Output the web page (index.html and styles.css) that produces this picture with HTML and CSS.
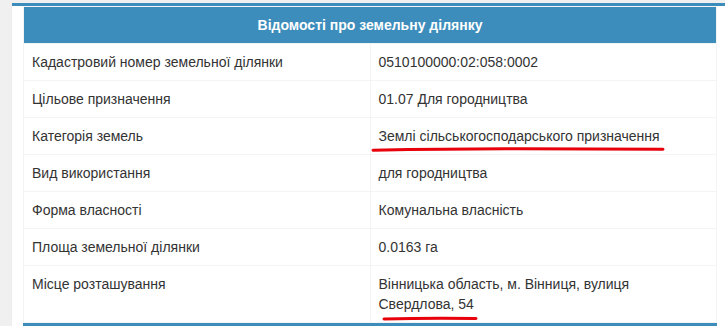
FILE: index.html
```html
<!DOCTYPE html>
<html lang="uk">
<head>
<meta charset="utf-8">
<title>Відомості про земельну ділянку</title>
<link rel="stylesheet" href="styles.css">
</head>
<body>
<div class="card">
  <table class="info">
    <thead>
      <tr><th colspan="2">Відомості про земельну ділянку</th></tr>
    </thead>
    <tbody>
      <tr><td>Кадастровий номер земельної ділянки</td><td>0510100000:02:058:0002</td></tr>
      <tr><td>Цільове призначення</td><td>01.07 Для городництва</td></tr>
      <tr><td>Категорія земель</td><td><span class="mark">Землі сільськогосподарського призначення<svg class="stroke stroke-long" viewBox="0 0 292 6" preserveAspectRatio="none"><path d="M1 4 Q 80 2 146 2.2 T 291 2.8" /></svg></span></td></tr>
      <tr><td>Вид використання</td><td>для городництва</td></tr>
      <tr><td>Форма власності</td><td>Комунальна власність</td></tr>
      <tr><td>Площа земельної ділянки</td><td>0.0163 га</td></tr>
      <tr><td>Місце розташування</td><td>Вінницька область, м. Вінниця, вулиця <span class="mark">Свердлова, 54<svg class="stroke stroke-short" viewBox="0 0 94 6" preserveAspectRatio="none"><path d="M1 3.6 Q 47 2 93 3" /></svg></span></td></tr>
    </tbody>
  </table>
  <div class="next-head"></div>
</div>
</body>
</html>
```

FILE: styles.css
```css
html, body {
  margin: 0;
  padding: 0;
}
body {
  background: #f0f0f0;
  padding: 3px 0 0 12px;
  overflow: hidden;
  font-family: "Liberation Sans", Arial, sans-serif;
  font-size: 14px;
  line-height: 20px;
  color: #333;
}
.card {
  background: #fff;
  border-top: 3px solid #3c8dbc;
  padding: 0 8px 0 11px;
  box-shadow: 0 1px 1px rgba(0,0,0,0.1);
}
.info {
  width: 694px;
  border-collapse: collapse;
  table-layout: fixed;
  border: 1px solid #f4f4f4;
}
.info th {
  background: #3c8dbc;
  color: #fff;
  font-weight: bold;
  text-align: center;
  padding: 8px;
  height: 20px;
}
.info td {
  width: 50%;
  padding: 8px;
  border: 1px solid #f4f4f4;
  vertical-align: top;
}
.info td:first-child {
  width: 331px;
}
.mark {
  position: relative;
}
.stroke {
  position: absolute;
  left: -7px;
  height: 5px;
  overflow: visible;
}
.stroke path {
  fill: none;
  stroke: #e8000b;
  stroke-width: 3;
  stroke-linecap: round;
  vector-effect: non-scaling-stroke;
}
.stroke-long {
  width: 292px;
  top: 19px;
}
.stroke-short {
  left: 4px;
  width: 94px;
  top: 20px;
}
.next-head {
  width: 694px;
  height: 20px;
  background: #3c8dbc;
}
```
